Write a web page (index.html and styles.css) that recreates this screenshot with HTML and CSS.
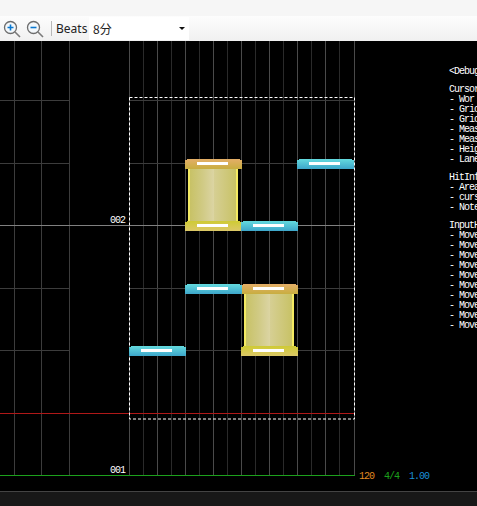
FILE: index.html
```html
<!DOCTYPE html>
<html lang="en">
<head>
    <meta charset="UTF-8">
    <meta name="viewport" content="width=device-width, initial-scale=1.0">
    <title>Chart Editor</title>
    <link rel="stylesheet" href="styles.css">
</head>
<body>
    <div class="title-strip"></div>
    <div class="toolbar">
        <button class="tool-button">
            <svg width="18" height="18" viewBox="0 0 18 18">
                <circle cx="7.5" cy="7.5" r="6" fill="#f4f8fb" stroke="#6d6d6d" stroke-width="1.3"/>
                <path d="M12 12l5 5" stroke="#7a7a7a" stroke-width="1.6"/>
                <path d="M4.5 7.5h6M7.5 4.5v6" stroke="#0a78d0" stroke-width="1.6"/>
            </svg>
        </button>
        <button class="tool-button">
            <svg width="18" height="18" viewBox="0 0 18 18">
                <circle cx="7.5" cy="7.5" r="6" fill="#f4f8fb" stroke="#6d6d6d" stroke-width="1.3"/>
                <path d="M12 12l5 5" stroke="#7a7a7a" stroke-width="1.6"/>
                <path d="M4.5 7.5h6" stroke="#0a78d0" stroke-width="1.6"/>
            </svg>
        </button>
        <div class="tool-separator"></div>
        <span class="tool-label">Beats</span>
        <div class="beat-select">
            <span>8分</span>
            <span class="beat-arrow"></span>
        </div>
    </div>

    <div class="stage">
        <svg class="grid" width="477" height="450" viewBox="0 41 477 450">
            <g stroke="#3c3c3c">
                <path d="M14.5 41v434M41.5 41v434M69.5 41v434"/>
                <path d="M129.5 41v434M157.5 41v434M185.5 41v434M213.5 41v434M241.5 41v434M269.5 41v434M297.5 41v434M325.5 41v434M354.5 41v434" stroke="#4a4a4a"/>
                <path d="M143.5 41v434M171.5 41v434M199.5 41v434M227.5 41v434M255.5 41v434M283.5 41v434M311.5 41v434M339.5 41v434" stroke="#2a2a2a"/>
                <path d="M0 100.5h69M129 100.5h226M0 163.5h69M129 163.5h226M0 288.5h69M129 288.5h226M0 350.5h69M129 350.5h226"/>
            </g>
            <path d="M0 225.5h355" stroke="#808080"/>
            <path d="M0 413.5h355" stroke="#b01818"/>
            <path d="M0 475.5h355" stroke="#1ca01c"/>
            <rect x="129.5" y="97.5" width="225" height="321.5" fill="none" stroke="#fff" stroke-dasharray="3 2"/>
        </svg>

        <span class="measure-label label-002">002</span>
        <span class="measure-label label-001">001</span>

        <div class="hold hold-a">
            <div class="hold-body"></div>
            <div class="note note-start"><i></i></div>
            <div class="note note-end"><i></i></div>
        </div>
        <div class="hold hold-b">
            <div class="hold-body"></div>
            <div class="note note-start"><i></i></div>
            <div class="note note-end"><i></i></div>
        </div>

        <div class="note note-tap tap-a"><i></i></div>
        <div class="note note-tap tap-b"><i></i></div>
        <div class="note note-tap tap-c"><i></i></div>
        <div class="note note-tap tap-d"><i></i></div>

        <div class="chart-status">
            <span class="status-bpm">120</span>
            <span class="status-meter">4/4</span>
            <span class="status-speed">1.00</span>
        </div>

        <div class="debug-panel">
            <p>&lt;Debug</p>
            <p class="debug-group">Cursor</p>
            <p>- Wor l</p>
            <p>- Gric</p>
            <p>- Gric</p>
            <p>- Meas</p>
            <p>- Meas</p>
            <p>- Heig</p>
            <p>- Lane</p>
            <p class="debug-group">HitInf</p>
            <p>- Area</p>
            <p>- curs</p>
            <p>- Note</p>
            <p class="debug-group">InputH</p>
            <p>- Move</p>
            <p>- Move</p>
            <p>- Move</p>
            <p>- Move</p>
            <p>- Move</p>
            <p>- Move</p>
            <p>- Move</p>
            <p>- Move</p>
            <p>- Move</p>
            <p>- Move</p>
        </div>
    </div>

    <div class="status-bar"></div>
</body>
</html>
```

FILE: styles.css
```css
html, body {
    margin: 0;
    height: 506px;
    overflow: hidden;
}
body {
    width: 477px;
    display: flex;
    flex-direction: column;
    background-color: #000;
    font-family: "Noto Sans CJK JP", "Noto Sans", sans-serif;
}
.title-strip {
    height: 16px;
    background-color: #f6f6f6;
}
.toolbar {
    height: 25px;
    display: flex;
    align-items: center;
    padding-left: 2px;
    box-sizing: border-box;
    background: linear-gradient(#fdfdfd, #f0f0f0);
    font-family: "Noto Sans", sans-serif;
    font-size: 12px;
    color: #222;
}
.tool-button {
    width: 23px;
    height: 20px;
    padding: 0 0 0 1px;
    border: none;
    background: none;
    display: flex;
    align-items: center;
}
.tool-separator {
    width: 1px;
    height: 15px;
    margin: 0 4px 0 3px;
    background-color: #b8b8b8;
}
.tool-label {
    width: 33px;
}
.beat-select {
    width: 100px;
    height: 23px;
    padding-left: 4px;
    box-sizing: border-box;
    display: flex;
    align-items: center;
    justify-content: space-between;
    background-color: #fff;
    font-family: "Noto Sans CJK JP", sans-serif;
}
.beat-arrow {
    width: 0;
    height: 0;
    margin-right: 4px;
    border-left: 3px solid transparent;
    border-right: 3px solid transparent;
    border-top: 3px solid #111;
}

/* the chart is a free canvas, notes sit at their beat and lane */
.stage {
    position: relative;
    height: 450px;
    overflow: hidden;
    background-color: #000;
}
.grid {
    display: block;
}
.measure-label {
    position: absolute;
    font-family: "Liberation Mono", monospace;
    font-size: 10px;
    line-height: 10px;
    letter-spacing: -1px;
    color: #fff;
}
.label-002 {
    left: 110px;
    top: 175px;
}
.label-001 {
    left: 110px;
    top: 425px;
}

.note {
    position: absolute;
    width: 57px;
    height: 10px;
    clip-path: polygon(2px 0, calc(100% - 2px) 0, calc(100% - 2px) 1px, 100% 1px, 100% 100%, 0 100%, 0 1px, 2px 1px);
}
.note i {
    position: absolute;
    left: 12px;
    top: 3px;
    width: 31px;
    height: 3px;
    background-color: #fff;
}
.note-tap {
    background: linear-gradient(#64dade, #3da6ca);
}
.tap-a { left: 297px; top: 118px; }
.tap-b { left: 241px; top: 180px; }
.tap-c { left: 185px; top: 243px; }
.tap-d { left: 129px; top: 305px; }

.hold {
    position: absolute;
    width: 57px;
    height: 72px;
}
.hold-a { left: 185px; top: 118px; }
.hold-b { left: 241px; top: 243px; }
.hold-body {
    position: absolute;
    left: 3px;
    top: 5px;
    width: 46px;
    height: 62px;
    border-left: 2px solid #f4ea62;
    border-right: 2px solid #f4ea62;
    background: linear-gradient(90deg, #c8c266, #d0ca84 27%, #dad3a0 49%, #e2dbb0 50%, #d6cf94 52%, #c8c266);
}
.note-start {
    left: 0;
    top: 0;
    background: linear-gradient(#e4ae68, #c8ae40);
}
.note-end {
    left: 0;
    bottom: 0;
    background: linear-gradient(#cfcb34, #dcc868);
}

.chart-status {
    position: absolute;
    left: 359px;
    top: 430px;
    display: flex;
    gap: 10px;
    font-family: "Liberation Mono", monospace;
    font-size: 10px;
    line-height: 12px;
    letter-spacing: -1px;
}
.status-bpm { color: #e08a20; }
.status-meter { color: #1ca01c; }
.status-speed { color: #1a90d8; }

.debug-panel {
    position: absolute;
    left: 449px;
    top: 26px;
    width: 60px;
    font-family: "Liberation Mono", monospace;
    font-size: 10px;
    line-height: 10px;
    letter-spacing: -1px;
    color: #fff;
}
.debug-panel p {
    margin: 0;
    white-space: pre;
}
.debug-group {
    padding-top: 8px;
}

.status-bar {
    flex: 1;
    border-top: 1px solid #444;
    background-color: #181818;
}
```
